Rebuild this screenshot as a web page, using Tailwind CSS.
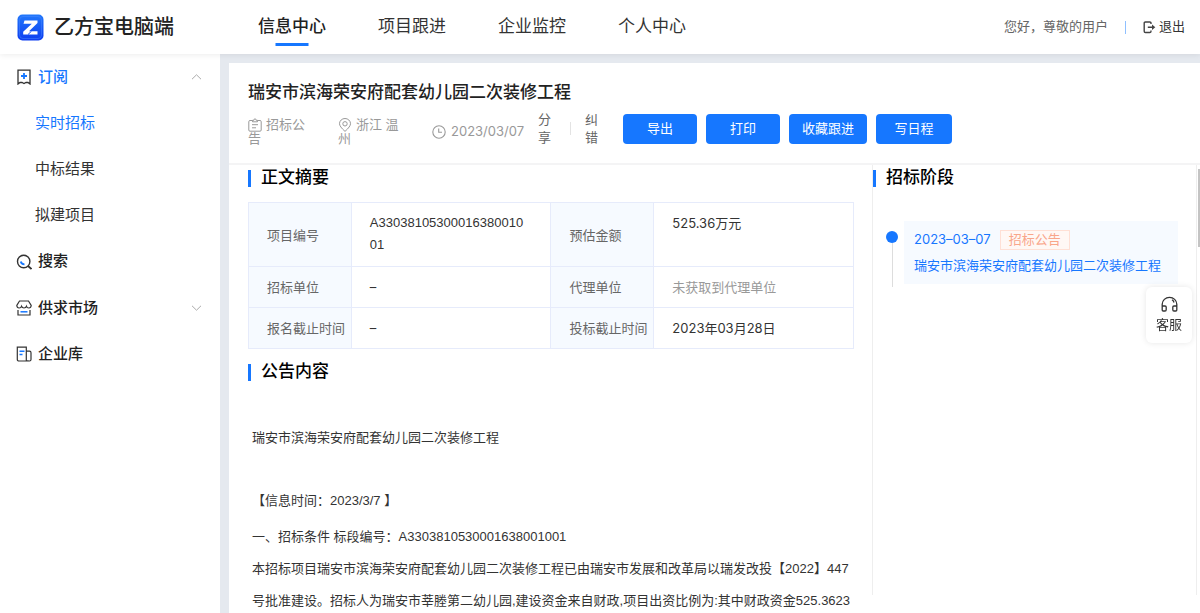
<!DOCTYPE html>
<html lang="zh-CN">
<head>
<meta charset="utf-8">
<meta name="viewport" content="width=device-width, initial-scale=1">
<title>乙方宝电脑端</title>
<script src="https://cdn.jsdelivr.net/npm/@tailwindcss/browser@4"></script>
</head>
<body class="flex h-screen flex-col overflow-hidden bg-[#e5e9ef] font-['Liberation_Sans','Noto_Sans_CJK_SC',sans-serif] text-[13px] text-[#333]">

<header class="relative z-10 flex h-[54px] shrink-0 items-center bg-white pr-[15px] pl-[17px] shadow-[0_1px_6px_rgba(0,0,0,0.08)]">
  <a href="#" class="flex w-[241px] shrink-0 items-center gap-[10px]">
    <svg class="size-[27px]" viewBox="0 0 27 27" aria-hidden="true">
      <defs><linearGradient id="lg" x1="0" y1="0" x2="0" y2="1"><stop offset="0" stop-color="#2278fb"/><stop offset="1" stop-color="#0d3df0"/></linearGradient></defs>
      <rect x=".5" y=".5" width="26" height="26" rx="5" fill="url(#lg)"/>
      <rect x="2.5" y="2.5" width="22" height="22" rx="3.5" fill="none" stroke="#4d8cff" stroke-opacity=".45"/>
      <path d="M7.5 6.5H20.5V9L12 17.200H20.500V20.500H6.200V17.800L14.800 9.800H6.500Z" fill="#fff"/>
      <path d="M11 20.500L14.500 17.200" stroke="#1a50f3" stroke-width="1"/>
    </svg>
    <span class="text-xl font-medium text-[#222]">乙方宝电脑端</span>
  </a>
  <nav class="flex h-full items-center gap-[52px] text-[17px] whitespace-nowrap">
    <a href="#" class="relative flex h-full items-center font-medium text-[#222]">信息中心<span class="absolute bottom-2 left-1/2 h-[3px] w-[33px] -translate-x-1/2 bg-[#1677ff]"></span></a>
    <a href="#">项目跟进</a>
    <a href="#">企业监控</a>
    <a href="#">个人中心</a>
  </nav>
  <div class="ml-auto flex items-center whitespace-nowrap">
    <span class="text-[#666]">您好，尊敬的用户</span>
    <span class="mx-[17px] h-[13px] w-px bg-[#8fc0ff]"></span>
    <a href="#" class="flex items-center gap-[3px]">
      <svg class="size-[13px]" viewBox="0 0 13 13" fill="none" stroke="#444" stroke-width="1.4" aria-hidden="true"><path d="M8 3V2.200Q8 1 6.800 1H2.400Q1.200 1 1.200 2.200V10.300Q1.200 11.500 2.400 11.500H6.800Q8 11.500 8 10.300V9.500M4.800 6.300H10.500"/><path d="M9 3.500L12.300 6.300L9 9.100Z" fill="#444" stroke="none"/></svg>
      退出</a>
  </div>
</header>

<div class="flex min-h-0 flex-1">
  <aside class="w-[220px] shrink-0 bg-white text-[15px]">
    <nav>
      <a href="#" class="flex h-[46px] items-center gap-[6px] pr-[18px] pl-4 font-medium text-[#1677ff]">
        <svg class="size-4" viewBox="0 0 16 16" fill="none" stroke-width="1.300" aria-hidden="true"><path d="M2 1.100H14V15L12 13.500H10L8 14.500L6 13.500H4L2 15Z" stroke="#333"/><path d="M8 4V10M5 7H11" stroke="#1677ff" stroke-width="1.800"/></svg>
        <span class="flex-1">订阅</span>
        <svg class="h-[6px] w-[11px]" viewBox="0 0 11 6" fill="none" stroke="#aaa" aria-hidden="true"><path d="M1 5.200L5.500 .8L10 5.200"/></svg>
      </a>
      <a href="#" class="flex h-[46px] items-center pl-[35px] text-[#1677ff]">实时招标</a>
      <a href="#" class="flex h-[46px] items-center pl-[35px]">中标结果</a>
      <a href="#" class="flex h-[46px] items-center pl-[35px]">拟建项目</a>
      <a href="#" class="flex h-[47px] items-center gap-[6px] pl-4 font-medium text-[#222]">
        <svg class="size-4" viewBox="0 0 16 16" fill="none" aria-hidden="true"><circle cx="7.700" cy="7.500" r="6.200" stroke="#333" stroke-width="1.400"/><path d="M12 12L15.500 15" stroke="#333" stroke-width="1.800"/><path d="M4.800 7.500Q5.200 10.200 8.500 10.300" stroke="#1677ff" stroke-width="1.800"/></svg>
        搜索</a>
      <a href="#" class="flex h-[46px] items-center gap-[6px] pr-[18px] pl-4 font-medium text-[#222]">
        <svg class="size-4" viewBox="0 0 16 16" fill="none" stroke="#333" stroke-width="1.200" aria-hidden="true"><path d="M3.500 1H12.500L15.200 5.500Q15 8 12.900 8Q11 8 10.500 6.300Q9.800 8 8 8Q6.200 8 5.500 6.300Q5 8 3.100 8Q1 8 .8 5.500ZM2 10V15H14V10"/><path d="M4.500 11.800H11.500" stroke="#1677ff" stroke-width="1.500"/></svg>
        <span class="flex-1">供求市场</span>
        <svg class="h-[6px] w-[11px]" viewBox="0 0 11 6" fill="none" stroke="#aaa" aria-hidden="true"><path d="M1 .8L5.500 5.200L10 .8"/></svg>
      </a>
      <a href="#" class="flex h-[46px] items-center gap-[6px] pl-4 font-medium text-[#222]">
        <svg class="size-4" viewBox="0 0 16 16" fill="none" stroke="#333" stroke-width="1.200" aria-hidden="true"><path d="M10.300 15H3Q1.300 15 1.300 13.500V1.200H10.300V15ZM10.300 5.200H13.500Q15 5.200 15 6.700V13.500Q15 15 13.500 15Q11 15 10.300 14.500"/><path d="M3.500 5.200H8.500M3.500 8.500H6.500" stroke="#1677ff" stroke-width="1.600"/></svg>
        企业库</a>
    </nav>
  </aside>

  <main class="mt-[9px] ml-[9px] flex min-w-0 flex-1 flex-col bg-white">
    <div class="shrink-0 border-b-2 border-[#f4f4f5] pb-[17px] pl-[19px]">
      <h1 class="pt-[17px] text-[17px] leading-[26px] font-medium text-[#222]">瑞安市滨海荣安府配套幼儿园二次装修工程</h1>
      <div class="mt-[5px] flex h-[35px] items-center whitespace-nowrap">
        <p class="w-[60px] shrink-0 pt-[6px] leading-[13px] break-all whitespace-normal text-[#999]"><svg class="mr-1 inline size-[14px] align-[-3px]" viewBox="0 0 14 14" fill="none" stroke="#999" aria-hidden="true"><path d="M4.500 2.500H2Q.8 2.500 .8 3.700V12Q.8 13.200 2 13.200H12Q13.200 13.200 13.200 12V3.700Q13.200 2.500 12 2.500H9.500M4.500 3.800V2.300H5.800Q6 .8 7 .8Q8 .8 8.200 2.300H9.500V3.800ZM4 6.700H10M4 9.800H8"/></svg>招标公告</p>
        <p class="ml-[30px] w-[66px] shrink-0 pt-[6px] leading-[13px] break-all whitespace-normal text-[#999]"><svg class="mr-1 inline size-[14px] align-[-3px]" viewBox="0 0 14 14" fill="none" stroke="#999" aria-hidden="true"><path d="M7 13.400Q1.500 8.500 1.500 5.700A5.500 5.200 0 0 1 12.500 5.700Q12.500 8.500 7 13.400Z"/><circle cx="7" cy="5.800" r="2.200"/></svg>浙江 温州</p>
        <p class="ml-[28px] flex shrink-0 items-center gap-[5px] pt-[7px] font-['Inter','Noto_Sans_CJK_SC',sans-serif] text-[#999]"><svg class="size-[14px]" viewBox="0 0 14 14" fill="none" stroke="#999" stroke-width="1.100" aria-hidden="true"><circle cx="7" cy="7" r="6.200"/><path d="M6.700 3.500V7.300H10"/></svg>2023/03/07</p>
        <button type="button" class="ml-[14px] w-[13px] shrink-0 pt-px leading-[18px] whitespace-normal text-[#666]">分享</button>
        <span class="ml-[19px] h-[13px] w-px bg-[#e3e3e3]"></span>
        <button type="button" class="ml-[14px] w-[13px] shrink-0 pt-px leading-[18px] whitespace-normal text-[#666]">纠错</button>
        <div class="ml-[25px] flex gap-[9px] text-white">
          <button type="button" class="h-[30px] w-[74px] rounded bg-[#1677ff]">导出</button>
          <button type="button" class="h-[30px] w-[74px] rounded bg-[#1677ff]">打印</button>
          <button type="button" class="h-[30px] w-[78px] rounded bg-[#1677ff]">收藏跟进</button>
          <button type="button" class="h-[30px] w-[76px] rounded bg-[#1677ff]">写日程</button>
        </div>
      </div>
    </div>

    <div class="relative flex min-h-0 flex-1 pr-[3px]">
      <section class="min-w-0 flex-1 overflow-hidden pr-[18px] pl-[19px]">
        <h2 class="flex h-[26px] items-center gap-[10px] text-[17px] font-medium text-black"><span class="h-[17px] w-[3px] bg-[#1677ff]"></span>正文摘要</h2>
        <table class="mt-[11px] w-full table-fixed border-collapse font-['Inter','Noto_Sans_CJK_SC',sans-serif] leading-[22px]">
          <colgroup><col class="w-[17%]"><col class="w-[33%]"><col class="w-[17%]"><col class="w-[33%]"></colgroup>
          <tbody>
            <tr class="h-[64px]">
              <th scope="row" class="border border-[#e6ebfb] bg-[#f6faff] pl-[18px] text-left font-normal whitespace-nowrap text-[#666]">项目编号</th>
              <td class="border border-[#e6ebfb] py-[9px] pr-6 pl-[18px] align-top font-['Liberation_Sans',sans-serif] break-all">A3303810530001638001001</td>
              <th scope="row" class="border border-[#e6ebfb] bg-[#f6faff] pl-[18px] text-left font-normal whitespace-nowrap text-[#666]">预估金额</th>
              <td class="border border-[#e6ebfb] px-[18px] py-[9px] align-top">525.36万元</td>
            </tr>
            <tr class="h-[41px]">
              <th scope="row" class="border border-[#e6ebfb] bg-[#f6faff] pl-[18px] text-left font-normal whitespace-nowrap text-[#666]">招标单位</th>
              <td class="border border-[#e6ebfb] px-[18px]">–</td>
              <th scope="row" class="border border-[#e6ebfb] bg-[#f6faff] pl-[18px] text-left font-normal whitespace-nowrap text-[#666]">代理单位</th>
              <td class="border border-[#e6ebfb] px-[18px] text-[#999]">未获取到代理单位</td>
            </tr>
            <tr class="h-[41px]">
              <th scope="row" class="border border-[#e6ebfb] bg-[#f6faff] pl-[18px] text-left font-normal whitespace-nowrap text-[#666]">报名截止时间</th>
              <td class="border border-[#e6ebfb] px-[18px]">–</td>
              <th scope="row" class="border border-[#e6ebfb] bg-[#f6faff] pl-[18px] text-left font-normal whitespace-nowrap text-[#666]">投标截止时间</th>
              <td class="border border-[#e6ebfb] px-[18px]">2023年03月28日</td>
            </tr>
          </tbody>
        </table>
        <h2 class="mt-[10px] flex h-[26px] items-center gap-[10px] text-[17px] font-medium text-black"><span class="h-[17px] w-[3px] bg-[#1677ff]"></span>公告内容</h2>
        <article class="pt-[37px] pl-1 leading-8">
          <p>瑞安市滨海荣安府配套幼儿园二次装修工程</p>
          <p class="mt-[31px]">【信息时间：2023/3/7 】</p>
          <p class="mt-1">一、招标条件 标段编号：A3303810530001638001001</p>
          <p>本招标项目瑞安市滨海荣安府配套幼儿园二次装修工程已由瑞安市发展和改革局以瑞发改投【2022】447号批准建设。招标人为瑞安市莘塍第二幼儿园,建设资金来自财政,项目出资比例为:其中财政资金525.3623</p>
        </article>
      </section>
      <aside class="mb-[18px] w-[325px] shrink-0 border-x border-[#eee]">
        <h2 class="flex h-[26px] items-center gap-[10px] text-[17px] font-medium text-black"><span class="h-[17px] w-[3px] bg-[#1677ff]"></span>招标阶段</h2>
        <div class="mt-[30px] flex pr-[18px] pl-[13px]">
          <div class="mt-[10px] flex h-[56px] w-3 shrink-0 flex-col items-center">
            <span class="size-3 shrink-0 rounded-full bg-[#1677ff]"></span>
            <span class="w-px flex-1 bg-[#ddd]"></span>
          </div>
          <div class="ml-[6px] h-[63px] min-w-0 flex-1 bg-[#f6faff] pt-[9px] pl-[10px] text-[#1677ff]">
            <div class="flex h-5 items-center gap-[9px]">
              <time datetime="2023-03-07" class="font-['Inter',sans-serif]">2023–03–07</time>
              <span class="flex h-5 items-center border border-[#ffe0d5] bg-[#fff8f5] px-2 text-[#f9a68a]">招标公告</span>
            </div>
            <a href="#" class="mt-[5px] block leading-[22px] whitespace-nowrap">瑞安市滨海荣安府配套幼儿园二次装修工程</a>
          </div>
        </div>
      </aside>
      <div class="absolute top-[4px] right-0 h-[78px] w-[2px] bg-[#c4c4c4]"></div>
    </div>
  </main>
</div>

<button type="button" class="fixed top-[287px] right-[8px] z-20 flex h-[56px] w-[46px] flex-col items-center justify-center gap-[2px] rounded-md bg-white shadow-[0_0_6px_rgba(0,0,0,0.10)]">
  <svg class="size-[17px]" viewBox="0 0 17 17" fill="none" stroke="#333" stroke-width="1.300" aria-hidden="true"><path d="M1.200 14V8.300A7.300 7 0 0 1 15.800 8.300V14Q15.800 15 14.800 15H13Q11.800 15 11.800 13.800V11Q11.800 10 13 10H15.800M1.200 10H4Q5.200 10 5.200 11V13.800Q5.200 15 4 15H2.200Q1.200 15 1.200 14M11 3.700Q12.600 4.700 13 6.500"/></svg>
  客服
</button>
</body>
</html>
